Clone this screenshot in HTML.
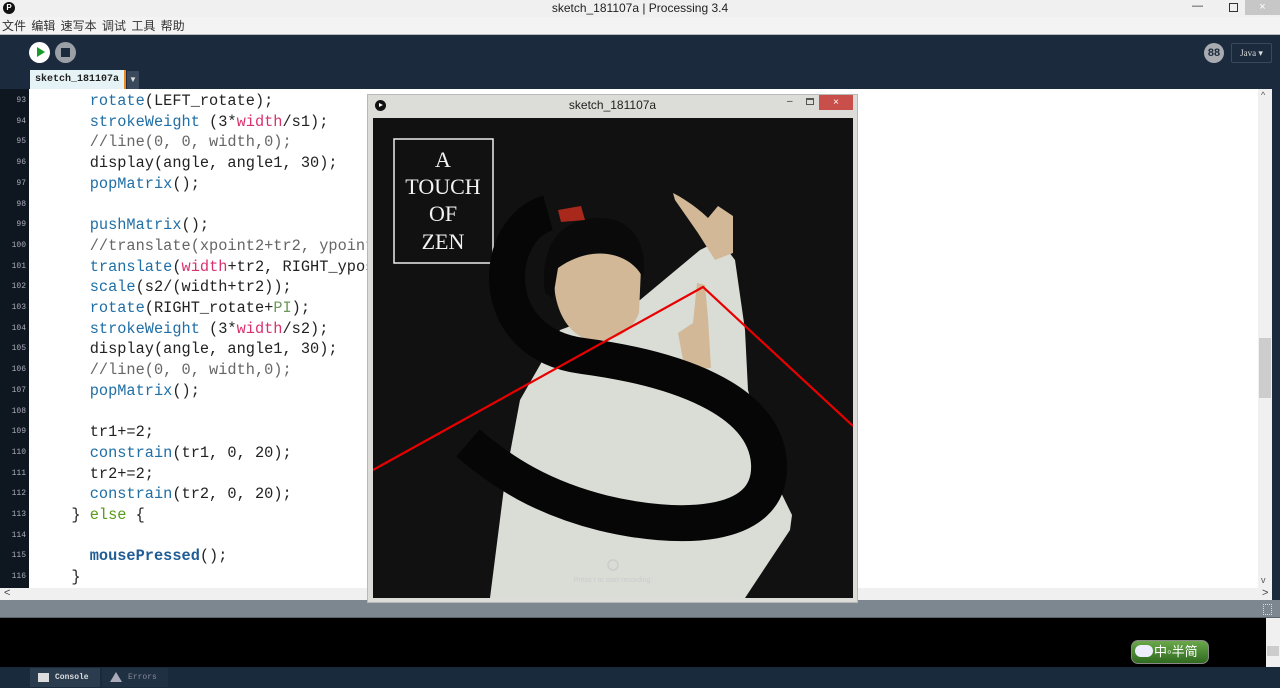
<!DOCTYPE html>
<html><head><meta charset="utf-8"><style>
*{margin:0;padding:0;box-sizing:border-box}
body{width:1280px;height:688px;overflow:hidden;position:relative;background:#1b2a3a;font-family:"Liberation Sans","Noto Sans CJK SC",sans-serif}
.abs{position:absolute}
.code{font-family:"Liberation Mono",monospace;font-size:15.3px;line-height:20.7px;white-space:pre;color:#222}
.k{color:#1f6ea5}.p{color:#d9306e}.c{color:#666}.g{color:#5a9a1a}.n{color:#6a9a5a}.b{color:#1f5c96;font-weight:bold}
.ln{font-family:"Liberation Mono",monospace;font-size:8px;line-height:20.7px;color:#aab;text-align:right;width:26px}
</style></head><body>
<div class="abs" style="left:0;top:0;width:1280px;height:17px;background:#f0f0f0"></div>
<div class="abs" style="left:3px;top:2px;width:12px;height:12px;border-radius:50%;background:#111;color:#fff;font-size:8px;text-align:center;line-height:12px;font-weight:bold">P</div>
<div class="abs" style="left:0;top:1px;width:1280px;text-align:center;font-size:12px;color:#222">sketch_181107a | Processing 3.4</div>
<div class="abs" style="left:1192px;top:0;font-size:11px;color:#333">&#8212;</div>
<div class="abs" style="left:1229px;top:3px;width:9px;height:9px;border:1.5px solid #333"></div>
<div class="abs" style="left:1245px;top:0;width:35px;height:15px;background:#c7c7c7;color:#fff;text-align:center;font-size:11px;line-height:15px">×</div>
<div class="abs" style="left:0;top:17px;width:1280px;height:18px;background:#f3f3f3;border-bottom:1px solid #bbb"></div>
<div class="abs" style="left:2px;top:17px;font-size:12px;color:#333;word-spacing:2px">文件 编辑 速写本 调试 工具 帮助</div>
<div class="abs" style="left:0;top:35px;width:1280px;height:54px;background:#1b2a3d"></div>
<div class="abs" style="left:29px;top:42px;width:21px;height:21px;border-radius:50%;background:#fff"></div>
<div class="abs" style="left:37px;top:47px;width:0;height:0;border-left:8px solid #1a9a2a;border-top:5.5px solid transparent;border-bottom:5.5px solid transparent"></div>
<div class="abs" style="left:55px;top:42px;width:21px;height:21px;border-radius:50%;background:#9aa0a6"></div>
<div class="abs" style="left:61px;top:48px;width:9px;height:9px;background:#1b2a3d"></div>
<div class="abs" style="left:1204px;top:43px;width:20px;height:20px;border-radius:50%;background:#a8acb0;color:#1b2a3d;font-size:11px;text-align:center;line-height:20px;font-weight:bold">88</div>
<div class="abs" style="left:1231px;top:43px;width:41px;height:20px;border:1px solid #3a4a5c;border-radius:2px;color:#ddd;font-family:'Liberation Serif',serif;font-size:9px;text-align:center;line-height:18px">Java ▾</div>
<div class="abs" style="left:30px;top:70px;width:96px;height:19px;background:#e6f3f6;border-right:2px solid #f08a20;font-family:'Liberation Mono',monospace;font-size:10px;font-weight:bold;color:#222;text-align:center;line-height:19px">sketch_181107a</div>
<div class="abs" style="left:127px;top:71px;width:12px;height:18px;background:#3a4a5c;color:#ddd;font-size:8px;text-align:center;line-height:18px">▼</div>
<div class="abs" style="left:0;top:89px;width:29px;height:499px;background:#0e1720"></div>
<div class="abs" style="left:29px;top:89px;width:1229px;height:499px;background:#fff"></div>
<div class="abs" style="left:1258px;top:89px;width:14px;height:499px;background:#f0f0f0"></div>
<div class="abs" style="left:1259px;top:338px;width:12px;height:60px;background:#cdcdcd"></div>
<div class="abs" style="left:1272px;top:89px;width:8px;height:511px;background:#1b2a3d"></div>
<div class="abs" style="left:1261px;top:90px;font-size:9px;color:#555">^</div>
<div class="abs" style="left:1261px;top:575px;font-size:9px;color:#555">v</div>
<div class="abs ln" style="left:0;top:91px">93<br>94<br>95<br>96<br>97<br>98<br>99<br>100<br>101<br>102<br>103<br>104<br>105<br>106<br>107<br>108<br>109<br>110<br>111<br>112<br>113<br>114<br>115<br>116</div>
<div class="abs code" style="left:53px;top:91px">    <span class="k">rotate</span>(LEFT_rotate);
    <span class="k">strokeWeight</span> (3*<span class="p">width</span>/s1);
    <span class="c">//line(0, 0, width,0);</span>
    display(angle, angle1, 30);
    <span class="k">popMatrix</span>();

    <span class="k">pushMatrix</span>();
    <span class="c">//translate(xpoint2+tr2, ypoint2);</span>
    <span class="k">translate</span>(<span class="p">width</span>+tr2, RIGHT_ypos);
    <span class="k">scale</span>(s2/(width+tr2));
    <span class="k">rotate</span>(RIGHT_rotate+<span class="n">PI</span>);
    <span class="k">strokeWeight</span> (3*<span class="p">width</span>/s2);
    display(angle, angle1, 30);
    <span class="c">//line(0, 0, width,0);</span>
    <span class="k">popMatrix</span>();

    tr1+=2;
    <span class="k">constrain</span>(tr1, 0, 20);
    tr2+=2;
    <span class="k">constrain</span>(tr2, 0, 20);
  } <span class="g">else</span> {

    <span class="b">mousePressed</span>();
  }</div>
<div class="abs" style="left:0;top:588px;width:1272px;height:12px;background:#f0f0f0"></div>
<div class="abs" style="left:4px;top:587px;font-size:11px;color:#444">&lt;</div>
<div class="abs" style="left:1262px;top:587px;font-size:11px;color:#444">&gt;</div>
<div class="abs" style="left:0;top:600px;width:1280px;height:18px;background:#7d878f;border-bottom:1px solid #5a636b"></div>
<div class="abs" style="left:1263px;top:604px;width:9px;height:11px;border:1px dotted #ddd"></div>
<div class="abs" style="left:0;top:618px;width:1266px;height:49px;background:#000"></div>
<div class="abs" style="left:1266px;top:618px;width:14px;height:49px;background:#f0f0f0"></div>
<div class="abs" style="left:1267px;top:646px;width:12px;height:10px;background:#ccc"></div>
<div class="abs" style="left:1131px;top:640px;width:78px;height:24px;border-radius:7px;background:linear-gradient(#6aa84a,#2f6a1f);border:1px solid #888;color:#fff;font-size:13px;line-height:22px;padding-left:22px">中◦半简</div>
<div class="abs" style="left:1135px;top:645px;width:18px;height:12px;border-radius:6px;background:#eef"></div>
<div class="abs" style="left:0;top:667px;width:1280px;height:21px;background:#192a3c"></div>
<div class="abs" style="left:30px;top:668px;width:70px;height:19px;background:#2a3c4e;color:#ddd;font-family:'Liberation Mono',monospace;font-size:8px;font-weight:bold;line-height:19px;padding-left:25px">Console</div>
<div class="abs" style="left:38px;top:673px;width:11px;height:9px;background:#ddd"></div>
<div class="abs" style="left:102px;top:668px;width:66px;height:19px;background:#1f3042;color:#889;font-family:'Liberation Mono',monospace;font-size:8px;line-height:19px;padding-left:26px">Errors</div>
<div class="abs" style="left:110px;top:672px;width:0;height:0;border-left:6px solid transparent;border-right:6px solid transparent;border-bottom:10px solid #aab"></div>
<div class="abs" style="left:367px;top:94px;width:491px;height:509px;background:#dcdcd8;border:1px solid #b8b8b4"></div>
<div class="abs" style="left:375px;top:100px;width:11px;height:11px;border-radius:50%;background:#111"></div>
<div class="abs" style="left:379px;top:103px;width:0;height:0;border-left:4px solid #fff;border-top:2.5px solid transparent;border-bottom:2.5px solid transparent"></div>
<div class="abs" style="left:367px;top:98px;width:491px;text-align:center;font-size:12px;color:#222">sketch_181107a</div>
<div class="abs" style="left:787px;top:96px;font-size:10px;color:#333">–</div>
<div class="abs" style="left:806px;top:98px;width:8px;height:7px;border:1px solid #555;border-top-width:2px"></div>
<div class="abs" style="left:819px;top:95px;width:34px;height:15px;background:#c9504a;color:#fff;font-size:10px;text-align:center;line-height:15px">×</div>
<svg class="abs" style="left:373px;top:118px" width="480" height="480" viewBox="0 0 480 480">
<rect width="480" height="480" fill="#111"/>
<rect x="21" y="21" width="99" height="124" fill="none" stroke="#eee" stroke-width="1.5"/>
<g fill="#f2f2f2" font-family="Liberation Serif,serif" font-size="22" text-anchor="middle">
<text x="70" y="49">A</text><text x="70" y="76">TOUCH</text><text x="70" y="103">OF</text><text x="70" y="131">ZEN</text></g>
<path d="M147,282 L187,212 L267,182 L327,132 L347,122 L362,142 L372,212 L375,272 L397,352 L419,397 L417,412 L372,480 L117,480 L132,362 Z" fill="#d9ddd6"/>
<path d="M300,75 C310,80 325,90 335,100 L345,88 L360,98 L360,135 L342,142 L325,115 L302,82 Z" fill="#d2b897"/>
<path d="M324,165 L332,167 L335,200 L338,250 L312,252 L305,215 L320,205 Z" fill="#d2b897"/>
<path d="M180,150 C185,120 255,115 268,150 L266,195 C258,215 240,225 215,222 C195,215 185,195 182,175 Z" fill="#d2b897"/>
<path d="M172,175 C165,120 195,98 230,100 C262,102 275,130 270,160 C258,135 220,125 185,150 L180,180 Z" fill="#0a0a0a"/>
<path d="M185,92 L208,88 L212,102 L188,104 Z" fill="#a8291c"/>
<path d="M175,95 C120,110 110,225 210,238 C300,250 392,280 396,345 C400,415 300,412 230,395 C170,380 130,355 95,325" stroke="#060606" stroke-width="36" fill="none"/>
<path d="M0,352 L330,169 L480,308" stroke="#e80000" stroke-width="2.2" fill="none"/>
<circle cx="240" cy="447" r="5" fill="none" stroke="#ccc" stroke-width="1.5"/>
<text x="240" y="464" fill="#ccc" font-size="7" text-anchor="middle" font-family="Liberation Sans,sans-serif">Press r to start recording.</text>
</svg>
</body></html>
